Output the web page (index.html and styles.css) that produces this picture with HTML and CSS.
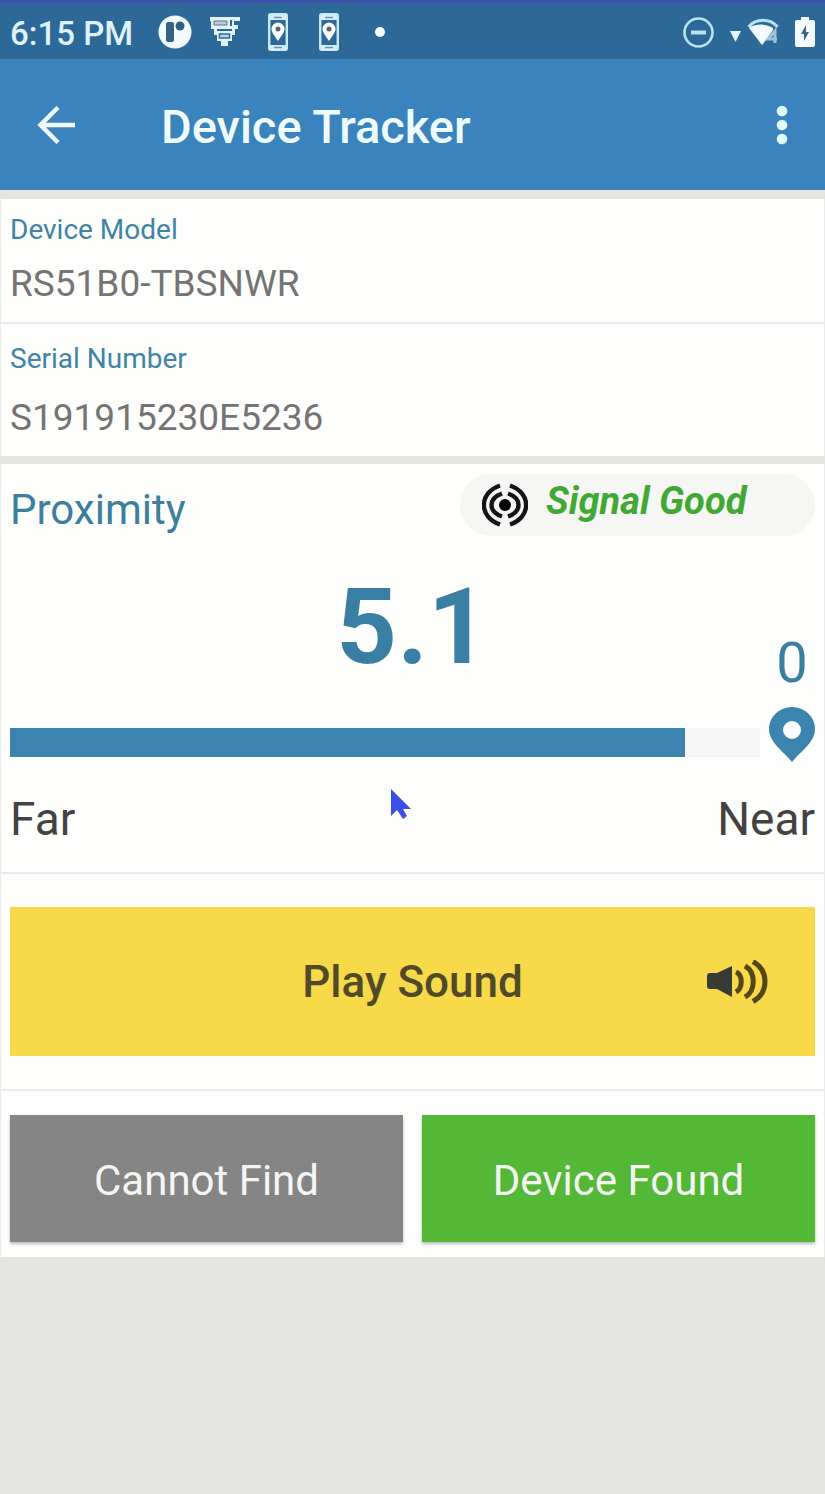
FILE: index.html
```html
<!DOCTYPE html>
<html lang="en">
<head>
<meta charset="utf-8">
<meta name="viewport" content="width=device-width, initial-scale=1">
<title>Device Tracker</title>
<link rel="stylesheet" href="styles.css">
</head>
<body>
<div class="status-bar">
  <span class="time">6:15 PM</span>
  <div class="notifications">
    <svg width="34" height="34" viewBox="0 0 34 34"><circle cx="17" cy="17" r="16.500" fill="#f2fbff"/><rect x="8" y="7" width="8" height="20" rx="2" fill="#35607f"/><circle cx="22" cy="11" r="4.500" fill="#35607f"/></svg>
    <svg width="30" height="30" viewBox="0 0 30 30"><path d="M0 0h30v4h-2v8h-3v6h-3v6h-4v5h-7v-5H7v-6H4v-6H1V4H0z" fill="#e3f3fa"/><path d="M4 4h13v4H4z" fill="#c9c6cd" stroke="#517b9c"/><path d="M20 3h2v6h-2zM24 4h6v4h-6zM7 12h15v2H7z" fill="#2d6998"/><path d="M9.500 17h10v4h-10z" fill="#b9dcea" stroke="#2d6998" stroke-width="1.500"/></svg>
    <svg width="20" height="38" viewBox="0 0 20 38"><rect x="1.200" y="1.200" width="17.600" height="35.600" rx="1.500" fill="none" stroke="#c5ebf7" stroke-width="2.400"/><path d="M2 2h16v5H2zM2 32h16v5H2z" fill="#d8eef6"/><path d="M6 4.500h8M6 34.500h8" stroke="#6796b4" stroke-width="1.500"/><path d="M10 28C6 22 3.500 19 3.500 16a6.500 6.500 0 0 1 13 0c0 3-2.500 6-6.500 12z" fill="#fff"/><circle cx="10" cy="16" r="2.500" fill="#4c6878"/></svg>
    <svg width="20" height="38" viewBox="0 0 20 38"><rect x="1.200" y="1.200" width="17.600" height="35.600" rx="1.500" fill="none" stroke="#c5ebf7" stroke-width="2.400"/><path d="M2 2h16v5H2zM2 32h16v5H2z" fill="#d8eef6"/><path d="M6 4.500h8M6 34.500h8" stroke="#6796b4" stroke-width="1.500"/><path d="M10 28C6 22 3.500 19 3.500 16a6.500 6.500 0 0 1 13 0c0 3-2.500 6-6.500 12z" fill="#fff"/><circle cx="10" cy="16" r="2.500" fill="#4c6878"/></svg>
    <svg width="10" height="10" viewBox="0 0 10 10"><circle cx="5" cy="5" r="5" fill="#f2fbff"/></svg>
  </div>
  <div class="indicators">
    <svg width="31" height="31" viewBox="0 0 31 31" fill="none" stroke="#b9e3f3"><circle cx="15.500" cy="15.500" r="14" stroke-width="2.600"/><path d="M8 15.500h15" stroke-width="4"/></svg>
    <svg class="data" width="11" height="12" viewBox="0 0 11 12"><path d="M0 1h11L5.500 12z" fill="#e6f5fb"/></svg>
    <svg width="32" height="28" viewBox="0 0 32 28"><path d="M1.500 9C9 0 23 0 30.500 9" fill="none" stroke="#b9e3f3" stroke-width="3"/><path d="M2 10c8-5 18-4 24 0v2l-7 10-4 5z" fill="#f5fcff"/><path d="M28 25V13l-7 8h9" fill="none" stroke="#9fc4d8" stroke-width="3"/></svg>
    <svg width="20" height="32" viewBox="0 0 20 32"><path d="M6 1h8v3h4q2 0 2 2v23q0 2-2 2H2q-2 0-2-2V6q0-2 2-2h4z" fill="#f2fbff"/><path d="M11 9 6 18h3v7l5-9h-3z" fill="#3f667c"/></svg>
  </div>
</div>
<header class="app-bar">
  <button class="icon-button" type="button" aria-label="Back"><svg width="38" height="38" viewBox="0 0 38 38" fill="none" stroke="#effcff" stroke-width="4.500"><path d="M38 19H4M21 1.500 3.500 19 21 36.500"/></svg></button>
  <h1 class="title">Device Tracker</h1>
  <button class="icon-button menu" type="button" aria-label="More options"><svg width="12" height="40" viewBox="0 0 12 40" fill="#e2fcff"><circle cx="6" cy="6" r="5.300"/><circle cx="6" cy="20" r="5.300"/><circle cx="6" cy="34" r="5.300"/></svg></button>
</header>
<main class="content">
  <dl class="card details">
    <div class="field"><dt>Device Model</dt><dd>RS51B0-TBSNWR</dd></div>
    <div class="field serial"><dt>Serial Number</dt><dd>S191915230E5236</dd></div>
  </dl>
  <div class="card">
    <section class="proximity">
      <div class="proximity-head">
        <h2 class="heading" id="proximity">Proximity</h2>
        <div class="signal">
          <svg width="46" height="44" viewBox="0 0 46 44" fill="none" stroke="#151515" stroke-width="4.400"><circle cx="23" cy="22" r="6" fill="#000" stroke="none"/><path d="M18 2.500C-3.500 10-3.500 34 18 41.500M28 2.500c21.500 7.500 21.500 31.500 0 39"/><path d="M20 10.500c-14 5-14 18 0 23M26 10.500c14 5 14 18 0 23"/></svg>
          <span>Signal Good</span>
        </div>
      </div>
      <div class="readout">
        <output class="level">5.1</output>
        <span class="target">0</span>
        <progress class="meter" max="100" value="90" aria-labelledby="proximity"></progress>
        <svg class="pin" width="46" height="56" viewBox="0 0 46 56"><path d="M23 55C13 43 0 35 0 22a23 22 0 0 1 46 0c0 13-13 21-23 33zM23 14a9 9 0 1 0 0 18 9 9 0 0 0 0-18z" fill="#3b84b0" fill-rule="evenodd"/></svg>
      </div>
      <div class="scale"><span>Far</span><span>Near</span></div>
      <svg class="cursor" width="26" height="34" viewBox="0 0 26 34"><path d="M2 1v27l6-6 6 9 4-3-4-7h8z" fill="#3c4fe6"/></svg>
    </section>
    <div class="sound-row">
      <button class="action sound" type="button"><span>Play Sound</span><svg width="62" height="44" viewBox="0 0 62 44"><path d="M0 16q0-3 3-3h7L25 6v31L10 29H3q-3 0-3-3z" fill="#383a35"/><path d="M29 12c7 3 7 16 0 20M38 6c11 6 11 25 0 31M46 1.500c16 9 16 31 0 40" fill="none" stroke="#544715" stroke-width="5"/></svg></button>
    </div>
    <div class="result-row">
      <button class="action missing" type="button">Cannot Find</button>
      <button class="action found" type="button">Device Found</button>
    </div>
  </div>
</main>
</body>
</html>
```
FILE: styles.css
```css
* { box-sizing: border-box; }
body {
  margin: 0;
  min-height: 100vh;
  background: #e3e4e0;
  color: #424242;
  font-family: Roboto, "Liberation Sans", sans-serif;
}
svg { display: block; flex: none; }
button { border: 0; padding: 0; font: inherit; }
h1, h2, dl, dd { margin: 0; }

.status-bar {
  display: flex;
  align-items: center;
  height: 59px;
  padding: 2px 10px 0;
  border-top: 3px solid #4052ac;
  background: #2d6998;
}
.time { color: #dff1fa; font-size: 33px; font-weight: 500; line-height: 36px; padding-top: 3px; }
.notifications { display: flex; align-items: center; margin-left: 25px; }
.notifications svg { margin-right: 18px; }
.notifications svg:nth-child(2) { margin-right: 28px; }
.notifications svg:nth-child(3) { margin-right: 31px; }
.notifications svg:nth-child(4) { margin-right: 36px; }
.indicators { display: flex; align-items: center; gap: 16px; margin-left: auto; }
.indicators .data { margin: 8px -10px 0 0; }

.app-bar {
  display: flex;
  align-items: center;
  height: 131px;
  padding: 0 37px;
  background: #3b83bc;
}
.icon-button { background: none; cursor: pointer; }
.title { margin-left: 86px; color: #effcff; font-size: 47px; font-weight: 500; line-height: 56px; padding-top: 5px; }
.menu { margin-left: auto; }

.content { display: grid; gap: 8px; padding-top: 9px; }
.card { background: #fefefd; border: 0 solid #e9eaea; border-width: 0 1px; }
.field { padding: 14px 9px; }
.field dt { color: #3f84a4; font-size: 28px; line-height: 34px; }
.field dd { margin-top: 13px; color: #747474; font-size: 37px; line-height: 48px; }
.serial { border-top: 2px solid #ebebeb; padding-top: 18px; }
.serial dd { margin-top: 18px; }

.proximity { position: relative; padding: 10px 9px 26px; }
.proximity-head { display: flex; justify-content: space-between; align-items: center; }
.heading { color: #3b7f9f; font-size: 42px; font-weight: 400; line-height: 50px; padding-top: 10px; }
.signal {
  display: flex;
  align-items: center;
  flex: 0 1 355px;
  gap: 18px;
  height: 62px;
  padding-left: 22px;
  border-radius: 31px;
  background: #f6f6f5;
  color: #3fa934;
  font-size: 38px;
  font-style: italic;
  font-weight: 700;
}
.signal span { padding-bottom: 9px; }
.readout { display: grid; grid-template-columns: 1fr 46px; column-gap: 9px; align-items: center; padding-top: 27px; }
.level { grid-area: 1 / 1 / 2 / 3; color: #397fa3; font-size: 106px; font-weight: 700; line-height: 128px; text-align: center; }
.target { grid-area: 1 / 2; align-self: end; color: #3b7f9f; font-size: 56px; line-height: 56px; text-align: center; }
.meter { grid-area: 2 / 1; appearance: none; width: 100%; height: 29px; margin-top: 30px; border: 0; background: #f6f6f6; }
.meter::-webkit-progress-bar { background: #f6f6f6; }
.meter::-webkit-progress-value { background: #3b84b0; }
.pin { grid-area: 2 / 2; margin-top: 16px; }
.scale { display: flex; justify-content: space-between; margin-top: 29px; font-size: 46px; line-height: 54px; }
.cursor { position: absolute; top: 324px; left: 388px; }

.sound-row, .result-row { border-top: 2px solid #ebebeb; padding: 33px 9px; }
.result-row { display: grid; grid-template-columns: 1fr 1fr; gap: 19px; padding: 24px 9px 15px; }
.action { line-height: 50px; cursor: pointer; }
.sound {
  display: grid;
  grid-template-columns: 62px 1fr 62px;
  align-items: center;
  width: 100%;
  height: 149px;
  padding: 0 46px;
  background: #f7d94a;
  color: #514a28;
  font-size: 44px;
  font-weight: 500;
}
.sound span { grid-column: 2; }
.missing, .found { height: 127px; padding-top: 4px; color: #f4f5f2; font-size: 42px; box-shadow: 0 2px 3px #0004; }
.missing { background: #858585; }
.found { background: #54b837; }
```
